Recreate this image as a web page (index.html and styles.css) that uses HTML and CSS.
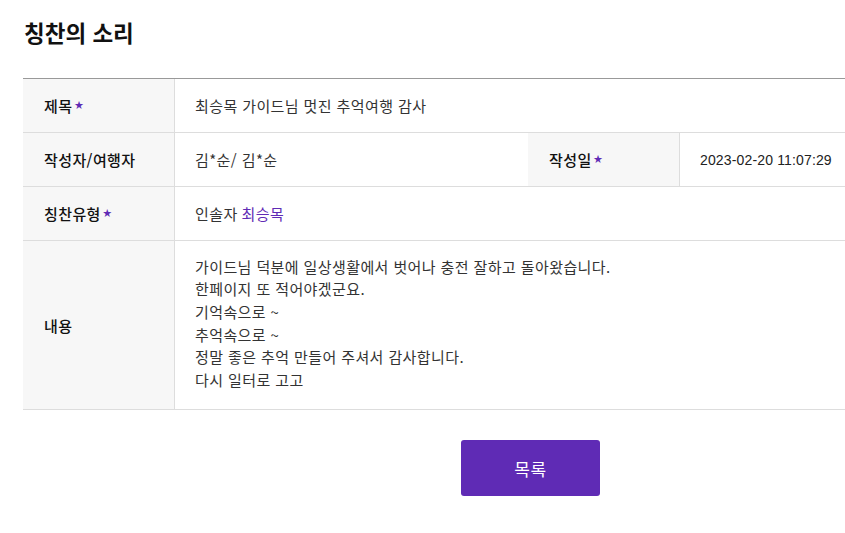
FILE: index.html
```html
<!DOCTYPE html>
<html lang="ko">
<head>
<meta charset="utf-8">
<link rel="stylesheet" href="styles.css">
</head>
<body>
<div class="page">
  <h2 class="title">칭찬의 소리</h2>
  <div class="board">
    <div class="row">
      <div class="label">제목<span class="req">★</span></div>
      <div class="value wide">최승목 가이드님 멋진 추억여행 감사</div>
    </div>
    <div class="row">
      <div class="label">작성자/여행자</div>
      <div class="value mid">김*순/ 김*순</div>
      <div class="label">작성일<span class="req">★</span></div>
      <div class="value date">2023-02-20 11:07:29</div>
    </div>
    <div class="row">
      <div class="label">칭찬유형<span class="req">★</span></div>
      <div class="value wide">인솔자 <span class="guide">최승목</span></div>
    </div>
    <div class="row tall">
      <div class="label">내용</div>
      <div class="value wide content">가이드님 덕분에 일상생활에서 벗어나 충전 잘하고 돌아왔습니다.<br>한페이지 또 적어야겠군요.<br>기억속으로 ~<br>추억속으로 ~<br>정말 좋은 추억 만들어 주셔서 감사합니다.<br>다시 일터로 고고</div>
    </div>
  </div>
  <div class="actions">
    <button class="btn">목록</button>
  </div>
</div>
</body>
</html>
```

FILE: styles.css
```css
* { box-sizing: border-box; }
html, body { margin: 0; padding: 0; background: #fff; }
body {
  font-family: "Noto Sans CJK KR", "Noto Sans", sans-serif;
  color: #333;
  overflow: hidden;
}
.page {
  padding: 0 0 0 23px;
  width: 845px;
}
.title {
  margin: 0;
  padding: 14px 0 0 1px;
  height: 78px;
  font-size: 22.5px;
  font-weight: 700;
  color: #111;
  line-height: 36px;
}
.board {
  border-top: 1px solid #999;
  width: 822px;
}
.row {
  display: flex;
  height: 54px;
  border-bottom: 1px solid #ddd;
}
.row.tall { height: 169px; }
.label {
  flex: 0 0 152px;
  background: #f7f7f7;
  border-right: 1px solid #ddd;
  display: flex;
  align-items: center;
  padding-left: 21px;
  font-size: 15px;
  letter-spacing: 0.4px;
  font-weight: 500;
  color: #111;
}
.req {
  color: #5f2bb5;
  font-size: 9px;
  margin-left: 2px;
  position: relative;
  top: -1px;
  letter-spacing: 0;
}
.value {
  display: flex;
  align-items: center;
  padding-left: 20px;
  font-size: 15px;
  letter-spacing: 0.4px;
  color: #333;
}
.value.wide { flex: 1; }
.value.mid { flex: 0 0 353px; }
.value.date {
  flex: 1;
  font-family: "Liberation Sans", Arial, sans-serif;
  font-size: 14px;
  letter-spacing: 0.15px;
  color: #222;
}
.guide { color: #5f2bb5; margin-left: 4px; }
.content {
  line-height: 22.6px;
  align-items: center;
  padding-bottom: 3px;
}
.actions {
  display: flex;
  padding: 30px 0 0 438px;
}
.btn {
  width: 139px;
  height: 56px;
  background: #5f2bb5;
  color: #fff;
  border: 0;
  border-radius: 3px;
  font-family: "Noto Sans CJK KR", sans-serif;
  font-size: 17px;
  letter-spacing: 0.5px;
}
```
